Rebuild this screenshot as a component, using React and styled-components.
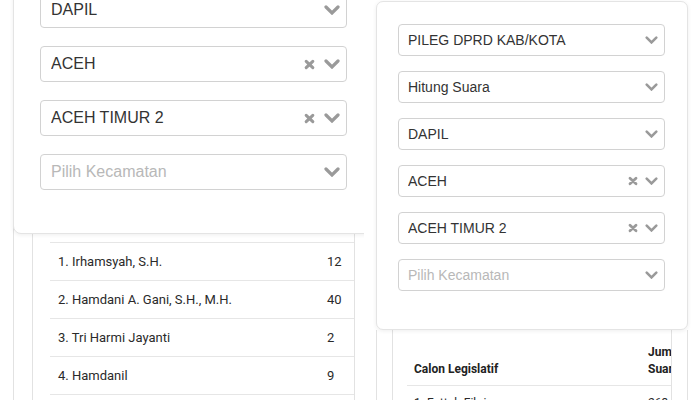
import React from "react";
import styled, { createGlobalStyle, css } from "styled-components";

const sizes = {
  lg: {
    selH: 36, selGap: 18, fs: 16, selPad: 11, padL: 26, padR: 26, cardTop: 27, cardBottom: 43,
    inset: 18, tablePad: 17, rowH: 38, tfs: 13, cellPad: 8, nameW: 269, numW: 120,
    chevW: 16, chevH: 10, xW: 11, iconGap: 9, radius: 8,
  },
  sm: {
    selH: 32, selGap: 15, fs: 14, selPad: 10, padL: 21, padR: 22, cardTop: 22, cardBottom: 38,
    inset: 15, tablePad: 14, rowH: 34, tfs: 12, cellPad: 7, nameW: 234, numW: 100,
    chevW: 13, chevH: 8, xW: 10, iconGap: 7, radius: 7,
  },
};

const GlobalStyle = createGlobalStyle`
  html, body {
    margin: 0;
    padding: 0;
    background: #fff;
    font-family: Roboto, "Liberation Sans", Arial, sans-serif;
  }
`;

const Screen = styled.div`
  display: flex;
  width: 700px;
  height: 400px;
  overflow: hidden;
  background: #fff;
`;

const Panel = styled.div`
  display: flex;
  flex-direction: column;
  flex: none;
  overflow: hidden;
  height: 400px;
  box-sizing: border-box;
  ${(p) => css`
    width: ${p.$width}px;
    padding-top: ${p.$top}px;
  `}
`;

const Card = styled.div`
  position: relative;
  z-index: 2;
  flex: none;
  display: flex;
  flex-direction: column;
  background: #fff;
  border: 1px solid #e4e4e4;
  box-shadow: 0 1px 4px rgba(0, 0, 0, 0.07);
  box-sizing: border-box;
  ${(p) => {
    const s = sizes[p.$size];
    return css`
      width: ${p.$width}px;
      margin-left: ${p.$left}px;
      margin-top: ${p.$offset || 0}px;
      gap: ${s.selGap}px;
      padding: ${s.cardTop}px ${s.padR}px ${s.cardBottom}px ${s.padL}px;
      border-radius: ${s.radius}px;
    `;
  }}
`;

const Select = styled.div`
  display: flex;
  align-items: center;
  border: 1px solid #d2d2d2;
  border-radius: 4px;
  background: #fff;
  box-sizing: border-box;
  font-family: "Liberation Sans", Arial, sans-serif;
  color: ${(p) => (p.$placeholder ? "#b8b8b8" : "#333")};
  ${(p) => {
    const s = sizes[p.$size];
    return css`
      height: ${s.selH}px;
      font-size: ${s.fs}px;
      padding: 0 6px 0 ${s.selPad - 1}px;
    `;
  }}
`;

const SelectValue = styled.span`
  flex: 1;
  white-space: nowrap;
  overflow: hidden;
`;

const Icons = styled.span`
  display: flex;
  align-items: center;
  gap: ${(p) => sizes[p.$size].iconGap}px;
`;

const Outer = styled.div`
  flex: none;
  border-left: 1px solid #e2e2e2;
  border-right: 1px solid #e2e2e2;
  box-sizing: border-box;
  height: 600px;
  ${(p) => {
    const s = sizes[p.$size];
    return css`
      width: ${p.$width}px;
      margin-left: ${p.$left}px;
      margin-top: ${p.$overlap}px;
      padding: 0 ${s.inset}px;
    `;
  }}
`;

const Inner = styled.div`
  height: 100%;
  border-left: 1px solid #e2e2e2;
  border-right: 1px solid #e2e2e2;
  overflow: hidden;
  ${(p) => css`
    padding: ${p.$padTop}px 0 0 ${sizes[p.$size].tablePad}px;
  `}
`;

const Table = styled.table`
  border-collapse: collapse;
  table-layout: fixed;
  color: #2a2a2a;
  ${(p) => {
    const s = sizes[p.$size];
    return css`
      width: ${s.nameW + s.numW}px;
      font-size: ${s.tfs}px;
    `;
  }}
`;

const Th = styled.th`
  text-align: left;
  vertical-align: bottom;
  font-weight: 700;
  color: #222;
  border-bottom: 1px solid #e6e6e6;
  ${(p) => {
    const s = sizes[p.$size];
    return css`
      width: ${(p.$num ? s.numW : s.nameW) - s.cellPad * 2}px;
      padding: ${s.cellPad}px;
      line-height: ${s.tfs + 5}px;
    `;
  }}
`;

const Td = styled.td`
  border-bottom: 1px solid #e6e6e6;
  white-space: nowrap;
  ${(p) => {
    const s = sizes[p.$size];
    return css`
      height: ${s.rowH - 1}px;
      padding: 0 ${s.cellPad}px;
    `;
  }}
`;

const Chevron = ({ size }) => {
  const s = sizes[size];
  return (
    <svg width={s.chevW} height={s.chevH} viewBox="0 0 16 10">
      <polyline points="2,2 8,8 14,2" fill="none" stroke="#9a9a9a" strokeWidth="3.2" strokeLinecap="round" />
    </svg>
  );
};

const Clear = ({ size }) => {
  const s = sizes[size];
  return (
    <svg width={s.xW} height={s.xW} viewBox="0 0 10 10">
      <path d="M2 2.2 L8 7.8 M8 2.2 L2 7.8" stroke="#9a9a9a" strokeWidth="2.8" strokeLinecap="round" />
    </svg>
  );
};

const filters = [
  { label: "PILEG DPRD KAB/KOTA" },
  { label: "Hitung Suara" },
  { label: "DAPIL" },
  { label: "ACEH", clear: true },
  { label: "ACEH TIMUR 2", clear: true },
  { label: "Pilih Kecamatan", placeholder: true },
];

const leftRows = [
  ["1. Irhamsyah, S.H.", "12"],
  ["2. Hamdani A. Gani, S.H., M.H.", "40"],
  ["3. Tri Harmi Jayanti", "2"],
  ["4. Hamdanil", "9"],
  ["5. Muhammad Yusuf", "7"],
];

const rightRows = [
  ["1. Fattah Fikri", "263"],
  ["2. Zulkifli", "118"],
];

const Filters = ({ size, width, left, offset }) => (
  <Card $size={size} $width={width} $left={left} $offset={offset}>
    {filters.map((f) => (
      <Select key={f.label} $size={size} $placeholder={f.placeholder}>
        <SelectValue>{f.label}</SelectValue>
        <Icons $size={size}>
          {f.clear && <Clear size={size} />}
          <Chevron size={size} />
        </Icons>
      </Select>
    ))}
  </Card>
);

const Results = ({ size, width, left, overlap, padTop, rows }) => (
  <Outer $size={size} $width={width} $left={left} $overlap={overlap}>
    <Inner $size={size} $padTop={padTop}>
      <Table $size={size}>
        <thead>
          <tr>
            <Th $size={size}>Calon Legislatif</Th>
            <Th $size={size} $num>Jumlah<br />Suara</Th>
          </tr>
        </thead>
        <tbody>
          {rows.map(([name, n]) => (
            <tr key={name}>
              <Td $size={size}>{name}</Td>
              <Td $size={size}>{n}</Td>
            </tr>
          ))}
        </tbody>
      </Table>
    </Inner>
  </Outer>
);

export default function App() {
  return (
    <>
      <GlobalStyle />
      <Screen>
        <Panel $width={364} $top={0}>
          <Filters size="lg" width={361} left={13} offset={-144} />
          <Results size="lg" width={361} left={13} overlap={-54} padTop={10} rows={leftRows} />
        </Panel>
        <Panel $width={336} $top={1}>
          <Filters size="sm" width={312} left={12} />
          <Results size="sm" width={312} left={12} overlap={0} padTop={7} rows={rightRows} />
        </Panel>
      </Screen>
    </>
  );
}
